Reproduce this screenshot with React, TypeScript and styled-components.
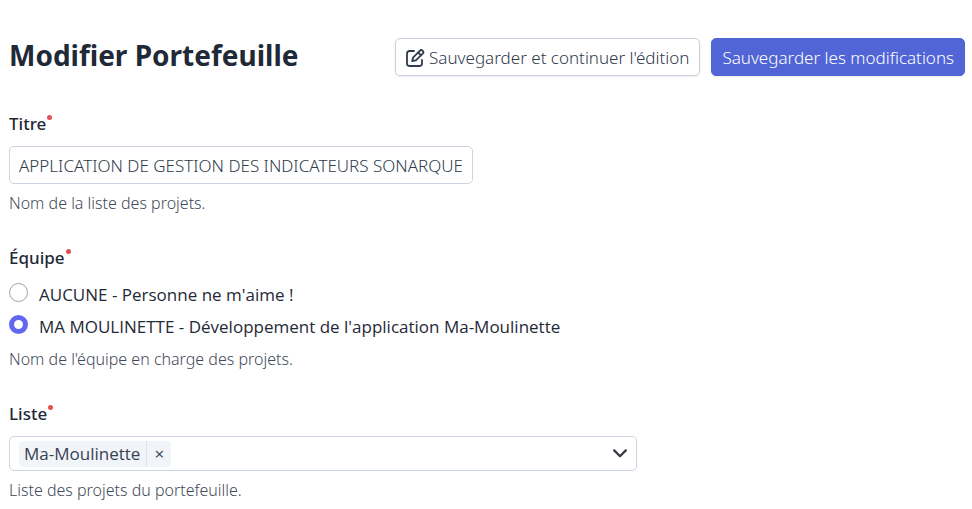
import React from "react";
import styled, { createGlobalStyle } from "styled-components";

const GlobalStyle = createGlobalStyle`
  *, *::before, *::after { box-sizing: border-box; }
  body {
    margin: 0;
    background: #fff;
    color: #1f2937;
    font-family: "Noto Sans", "Open Sans", sans-serif;
    font-size: 17px;
    font-weight: 300;
    line-height: 24px;
  }
  button, input { font: inherit; color: inherit; }
`;

const Page = styled.main`
  padding: 38px 7px 8px 9px;
`;

const Header = styled.header`
  display: flex;
  align-items: center;
  justify-content: space-between;
  gap: 16px;
  margin-bottom: 36px;
`;

const Title = styled.h1`
  margin: 0;
  padding-bottom: 4px;
  font-size: 28px;
  line-height: 34px;
  font-weight: 700;
  color: #1f2937;
`;

const Actions = styled.div`
  display: flex;
  gap: 11px;
`;

const Button = styled.button<{ $primary?: boolean }>`
  display: inline-flex;
  align-items: center;
  gap: 4px;
  height: 38px;
  padding: 1px 10px 0;
  white-space: nowrap;
  border-radius: 5px;
  border: 1px solid ${(p) => (p.$primary ? "#5065d4" : "#cbd0df")};
  background: ${(p) => (p.$primary ? "#5165d6" : "#fff")};
  color: ${(p) => (p.$primary ? "#fff" : "#2f3a4a")};
  box-shadow: 0 1px 2px rgba(0, 0, 0, 0.08);
`;

const Form = styled.form`
  display: flex;
  flex-direction: column;
  gap: 31px;
`;

const Field = styled.div`
  display: flex;
  flex-direction: column;
  align-items: flex-start;
`;

const Group = styled.fieldset`
  margin: 0;
  padding: 0;
  border: 0;
`;

const Label = styled.label`
  font-weight: 500;
  margin-bottom: 10px;
`;

const Legend = styled.legend`
  padding: 0;
  font-weight: 500;
  margin-bottom: 9px;
`;

const Dot = styled.span`
  display: inline-block;
  width: 5px;
  height: 5px;
  margin-left: 1px;
  border-radius: 50%;
  background: #e05252;
  vertical-align: 10px;
`;

const TextInput = styled.input`
  width: 464px;
  max-width: 100%;
  height: 38px;
  padding: 0 9px;
  border: 1px solid #cbd5e1;
  border-radius: 5px;
  background: #fff;
  color: #2f3a4a;
`;

const Help = styled.p<{ $tight?: boolean }>`
  margin: ${(p) => (p.$tight ? 4 : 7)}px 0 0;
  font-size: 16px;
  color: #3f4a5a;
`;

const Choice = styled.label`
  display: flex;
  align-items: center;
  gap: 11px;
  height: 32px;
  font-family: "Open Sans", "Noto Sans", sans-serif;
  font-weight: 400;
`;

const Radio = styled.input`
  appearance: none;
  width: 19px;
  height: 19px;
  margin: 0 0 5px;
  border: 1px solid #9ca3af;
  border-radius: 50%;
  background: #fff;
  &:checked { border: 5px solid #6366f1; }
`;

const Combo = styled.div`
  display: flex;
  align-items: center;
  width: 628px;
  max-width: 100%;
  height: 35px;
  padding: 0 9px;
  border: 1px solid #cbd5e1;
  border-radius: 5px;
`;

const Tag = styled.span`
  display: flex;
  align-items: center;
  height: 26px;
  padding-left: 5px;
  border-radius: 4px;
  background: #f1f5f9;
  color: #374151;
  font-family: "Open Sans", "Noto Sans", sans-serif;
  font-weight: 400;
`;

const Remove = styled.button`
  width: 25px;
  height: 26px;
  margin-left: 6px;
  padding: 0;
  border: 0;
  border-left: 1px solid #dfe4ec;
  background: none;
`;

const Search = styled.input`
  flex: 1;
  min-width: 0;
  border: 0;
  outline: 0;
  background: none;
`;

const EditIcon = () => (
  <svg width="19" height="18" viewBox="0 0 19 18" fill="none" stroke="currentColor" strokeWidth="1.800" strokeLinejoin="round" strokeLinecap="round" aria-hidden="true">
    <path d="M8 2H3.400A2.400 2.400 0 0 0 1 4.400V14.600A2.400 2.400 0 0 0 3.400 17H13.600A2.400 2.400 0 0 0 16 14.600V11" />
    <path d="M6.200 12 7 8.600 13.800 1.800A2 2 0 0 1 16.700 4.700L9.800 11.300Z" />
    <path d="M12.200 3.500 15 6.300" />
  </svg>
);

const Chevron = () => (
  <svg width="14" height="9" viewBox="0 0 14 9" fill="none" stroke="#343a40" strokeWidth="2.200" strokeLinecap="round" strokeLinejoin="round" aria-hidden="true">
    <path d="M1.200 1.400 7 7.200 12.800 1.400" />
  </svg>
);

export default function App() {
  return (
    <>
      <GlobalStyle />
      <Page>
        <Header>
          <Title>Modifier Portefeuille</Title>
          <Actions>
            <Button type="submit" form="edit">
              <EditIcon />
              Sauvegarder et continuer l'édition
            </Button>
            <Button type="submit" form="edit" $primary>
              Sauvegarder les modifications
            </Button>
          </Actions>
        </Header>
        <Form id="edit">
          <Field>
            <Label htmlFor="titre">Titre<Dot /></Label>
            <TextInput id="titre" defaultValue="APPLICATION DE GESTION DES INDICATEURS SONARQUE" />
            <Help>Nom de la liste des projets.</Help>
          </Field>
          <Group>
            <Legend>Équipe<Dot /></Legend>
            <Choice><Radio type="radio" name="equipe" />AUCUNE - Personne ne m'aime !</Choice>
            <Choice><Radio type="radio" name="equipe" defaultChecked />MA MOULINETTE - Développement de l'application Ma-Moulinette</Choice>
            <Help $tight>Nom de l'équipe en charge des projets.</Help>
          </Group>
          <Field>
            <Label htmlFor="liste">Liste<Dot /></Label>
            <Combo>
              <Tag>Ma-Moulinette<Remove type="button" aria-label="Retirer Ma-Moulinette">×</Remove></Tag>
              <Search id="liste" />
              <Chevron />
            </Combo>
            <Help>Liste des projets du portefeuille.</Help>
          </Field>
        </Form>
      </Page>
    </>
  );
}
